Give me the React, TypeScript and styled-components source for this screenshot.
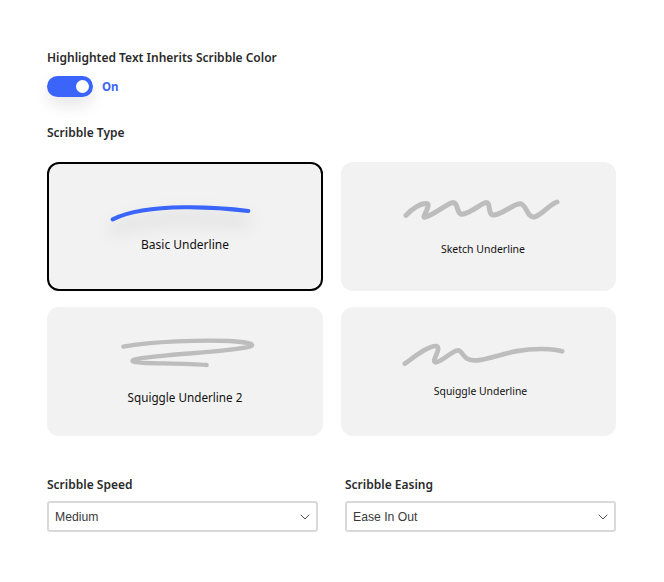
import styled, { createGlobalStyle } from "styled-components";
import { ChevronDown } from "lucide-react";

const GlobalStyle = createGlobalStyle`
  html, body {
    margin: 0;
    background: #ffffff;
    font-family: "Noto Sans", "Open Sans", sans-serif;
    color: #222222;
  }
`;

const Page = styled.div`
  box-sizing: border-box;
  width: 664px;
  height: 582px;
  padding: 49px 48px 0 47px;
  display: flex;
  flex-direction: column;
`;

const Heading = styled.div`
  font-size: 12px;
  line-height: 18px;
  font-weight: 600;
  color: #2a2a2a;
`;

const ToggleRow = styled.div`
  display: flex;
  align-items: center;
  gap: 9px;
  margin: 9px 0 27px;
`;

const Toggle = styled.div`
  box-sizing: border-box;
  width: 46px;
  height: 21px;
  border-radius: 11px;
  padding-right: 4px;
  background: #3a64fa;
  box-shadow: 0 8px 16px rgba(0, 0, 0, 0.1);
  display: flex;
  align-items: center;
  justify-content: flex-end;
`;

const Knob = styled.div`
  width: 13px;
  height: 13px;
  border-radius: 50%;
  background: #ffffff;
`;

const ToggleLabel = styled.span`
  font-size: 11.5px;
  font-weight: 700;
  color: #3a64fa;
`;

const CardGrid = styled.div`
  display: grid;
  grid-template-columns: 276px 275px;
  grid-auto-rows: 129px;
  column-gap: 18px;
  row-gap: 16px;
  margin: 20px 0 40px;
`;

const Card = styled.div<{ $selected?: boolean; $top: number }>`
  box-sizing: border-box;
  border: 2px solid ${(props) => (props.$selected ? "#000000" : "transparent")};
  border-radius: 12px;
  background: #f2f2f2;
  padding-top: ${(props) => props.$top}px;
  display: flex;
  flex-direction: column;
  align-items: center;
`;

const Scribble = styled.svg<{ $selected?: boolean }>`
  display: block;
  flex: none;
  overflow: visible;
  fill: none;
  stroke: ${(props) => (props.$selected ? "#3a64fa" : "#bdbdbd")};
  stroke-linecap: round;
  stroke-linejoin: round;
  ${(props) =>
    props.$selected && "filter: drop-shadow(0 11px 9px rgba(0, 0, 0, 0.2));"}
`;

const CardLabel = styled.div<{ $size: number; $gap: number; $shift: number }>`
  margin-top: ${(props) => props.$gap}px;
  padding-left: ${(props) => props.$shift}px;
  font-size: ${(props) => props.$size}px;
  line-height: 18px;
  color: #111111;
`;

const Fields = styled.div`
  display: grid;
  grid-template-columns: 271px 271px;
  column-gap: 27px;
`;

const Field = styled.div`
  display: flex;
  flex-direction: column;
  gap: 7px;
`;

const SelectBox = styled.div`
  box-sizing: border-box;
  height: 31px;
  padding: 0 3px 0 6px;
  border: 2px solid #d9d9d9;
  border-radius: 3px;
  background: #ffffff;
  display: flex;
  align-items: center;
  justify-content: space-between;
  font-family: "Liberation Sans", Arial, sans-serif;
  font-size: 12.2px;
  color: #3a3a3a;

  svg {
    color: #555555;
  }
`;

const scribbles = [
  {
    label: "Basic Underline",
    selected: true,
    top: 38,
    gap: 13,
    size: 12,
    shift: 0,
    width: 150,
    height: 21,
    viewBox: "210 141 450 63",
    strokeWidth: 12,
    d: "M218 193 C262 172 335 158 430 157 C500 156 570 161 625 168",
  },
  {
    label: "Sketch Underline",
    top: 34,
    gap: 18,
    size: 10.5,
    shift: 9,
    width: 167,
    height: 24,
    viewBox: "180 129 501 72",
    strokeWidth: 15,
    d: "M213 181 C232 160 258 144 276 146 C288 150 262 186 268 187 C290 184 330 150 352 143 C372 140 362 178 382 178 C408 174 435 148 452 143 C470 140 455 182 478 180 C510 174 535 146 556 146 C576 150 575 188 598 186 C622 180 640 150 666 141",
  },
  {
    label: "Squiggle Underline 2",
    top: 27,
    gap: 19,
    size: 11.7,
    shift: 0,
    width: 140,
    height: 33,
    viewBox: "225 108 420 99",
    strokeWidth: 13,
    d: "M250 140 C340 124 480 120 570 123 C620 126 645 132 634 138 C610 150 470 158 380 166 C320 172 272 176 278 184 C285 192 420 188 500 195",
  },
  {
    label: "Squiggle Underline",
    top: 33,
    gap: 15,
    size: 10.4,
    shift: 4,
    width: 174,
    height: 25,
    viewBox: "169.5 126 522 75",
    strokeWidth: 14,
    d: "M208 191 C240 168 280 136 302 138 C322 144 282 188 302 187 C325 182 355 146 372 152 C385 160 385 184 425 181 C480 174 530 146 620 147 C650 148 668 150 680 154",
  },
];

const App = () => {
  return (
    <Page>
      <GlobalStyle />
      <Heading>Highlighted Text Inherits Scribble Color</Heading>
      <ToggleRow>
        <Toggle>
          <Knob />
        </Toggle>
        <ToggleLabel>On</ToggleLabel>
      </ToggleRow>
      <Heading>Scribble Type</Heading>
      <CardGrid>
        {scribbles.map((item) => (
          <Card key={item.label} $selected={item.selected} $top={item.top}>
            <Scribble
              $selected={item.selected}
              width={item.width}
              height={item.height}
              viewBox={item.viewBox}
              strokeWidth={item.strokeWidth}
            >
              <path d={item.d} />
            </Scribble>
            <CardLabel $size={item.size} $gap={item.gap} $shift={item.shift}>
              {item.label}
            </CardLabel>
          </Card>
        ))}
      </CardGrid>
      <Fields>
        <Field>
          <Heading>Scribble Speed</Heading>
          <SelectBox>
            Medium
            <ChevronDown size={16} strokeWidth={1.5} />
          </SelectBox>
        </Field>
        <Field>
          <Heading>Scribble Easing</Heading>
          <SelectBox>
            Ease In Out
            <ChevronDown size={16} strokeWidth={1.5} />
          </SelectBox>
        </Field>
      </Fields>
    </Page>
  );
};

export default App;
